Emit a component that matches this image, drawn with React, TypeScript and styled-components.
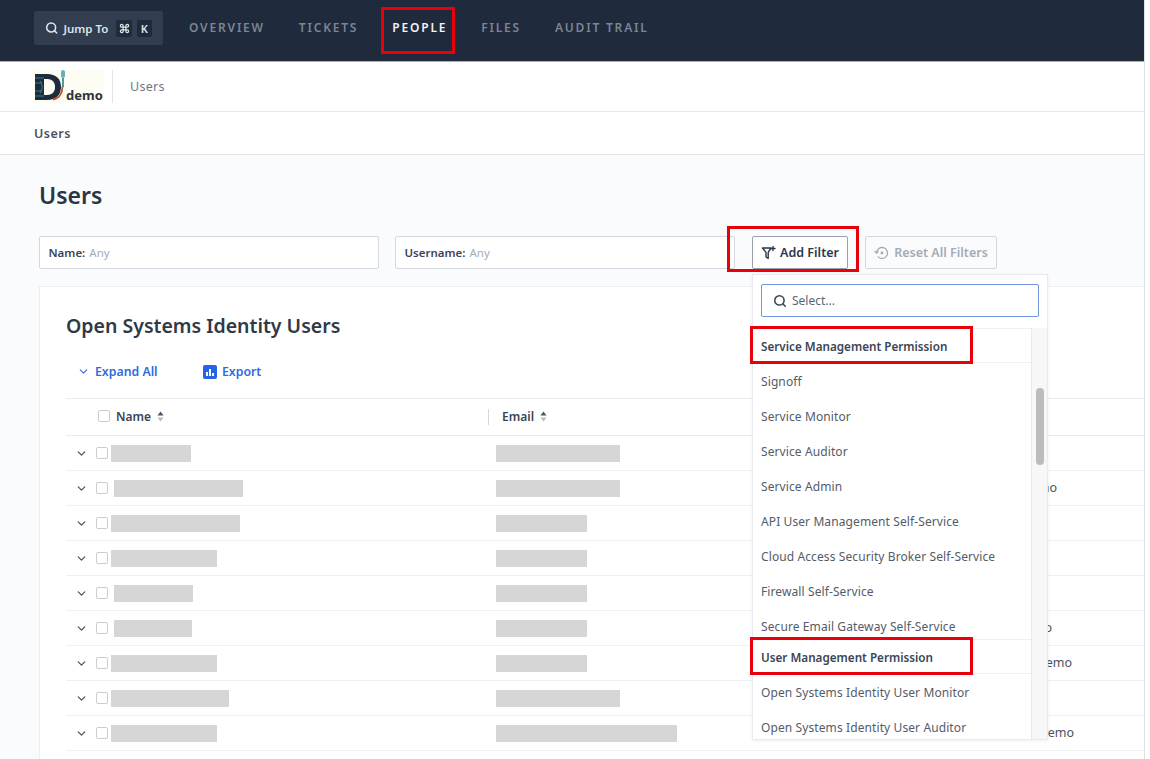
import styled, { createGlobalStyle } from 'styled-components'
import { ChevronDown, Command, Search } from 'lucide-react'

const font = `"Noto Sans", "Liberation Sans", sans-serif`

interface UserRow {
    nameStart: number
    nameWidth: number
    emailWidth: number
    indent?: number
}

const users: UserRow[] = [
    { nameStart: 4, nameWidth: 80, emailWidth: 124 },
    { nameStart: 7, nameWidth: 129, emailWidth: 124, indent: 275 },
    { nameStart: 4, nameWidth: 129, emailWidth: 91 },
    { nameStart: 4, nameWidth: 106, emailWidth: 91 },
    { nameStart: 7, nameWidth: 79, emailWidth: 91 },
    { nameStart: 7, nameWidth: 78, emailWidth: 91, indent: 270 },
    { nameStart: 4, nameWidth: 106, emailWidth: 91, indent: 290 },
    { nameStart: 4, nameWidth: 118, emailWidth: 124 },
    { nameStart: 4, nameWidth: 106, emailWidth: 181, indent: 292 },
    { nameStart: 4, nameWidth: 118, emailWidth: 124 },
]

const navLinks = ['OVERVIEW', 'TICKETS', 'PEOPLE', 'FILES', 'AUDIT TRAIL']

const permissionGroups = [
    {
        title: 'Service Management Permission',
        options: [
            'Signoff',
            'Service Monitor',
            'Service Auditor',
            'Service Admin',
            'API User Management Self-Service',
            'Cloud Access Security Broker Self-Service',
            'Firewall Self-Service',
            'Secure Email Gateway Self-Service',
        ],
    },
    {
        title: 'User Management Permission',
        options: ['Open Systems Identity User Monitor', 'Open Systems Identity User Auditor'],
    },
]

function Logo() {
    return (
        <LogoBox>
            <svg width="36" height="33" viewBox="0 0 36 33" fill="none">
                <path d="M1 4h12c9 0 14 5 14 13s-5 13-14 13H1z" fill="#1d2b3a" />
                <path d="M1 8h9M1 13h7M1 21h7M1 26h9" stroke="#3a7f8c" strokeWidth="1" />
                <path d="M10 9h3c6 0 8 4 8 8s-2 8-8 8h-3z" fill="#fdfdf3" />
                <path d="M6 11c3 3 3 9 0 12" stroke="#2f7483" strokeWidth="1.200" />
                <path d="M19 29.500c6-1 9.500-6 9.500-13" stroke="#c4512f" strokeWidth="1.800" />
                <path d="M29 17V8" stroke="#3f8c98" strokeWidth="1.800" />
                <rect x="27" y="0" width="4" height="8" rx="2" fill="#6aaeb8" />
            </svg>
            <LogoText>demo</LogoText>
        </LogoBox>
    )
}

function FilterPlusIcon() {
    return (
        <svg width="16" height="16" viewBox="0 0 16 16" fill="none" stroke="#2d3748" strokeWidth="1.400" strokeLinejoin="round" strokeLinecap="round">
            <path d="M1.500 3h8.500L7.200 7.400v6L5 12V7.400z" />
            <path d="M12 1.500v4M10 3.500h4" />
        </svg>
    )
}

function ResetIcon() {
    return (
        <svg width="16" height="16" viewBox="0 0 16 16" fill="none" stroke="#a5abb5" strokeWidth="1.300" strokeLinecap="round" strokeLinejoin="round">
            <path d="M2.500 8a5.500 5.500 0 1 1 1.600 3.900" />
            <path d="M1 6.500 2.500 8 4 6.500" />
            <circle cx="8" cy="8" r="0.800" fill="#a5abb5" />
        </svg>
    )
}

function ExportIcon() {
    return (
        <svg width="14" height="14" viewBox="0 0 14 14">
            <rect width="14" height="14" rx="2" fill="#2563eb" />
            <path d="M3 7h2v4H3zM6 4h2v7H6zM9 8h2v3H9z" fill="#fff" />
        </svg>
    )
}

function SortIcon() {
    return (
        <svg width="7" height="11" viewBox="0 0 7 11">
            <path d="M3.500 0.500 6.500 4.500H0.500z" fill="#4a5568" />
            <path d="M3.500 10.500 0.500 6.500H6.500z" fill="#b6bcc6" />
        </svg>
    )
}

export default function App() {
    return (
        <Screen>
            <GlobalStyle />
            <Page>
                <TopNav>
                    <JumpTo>
                        <Search size={14} strokeWidth={2.8} color="#dfe3ea" />
                        <JumpLabel>Jump To</JumpLabel>
                        <KeyCap><Command size={11} strokeWidth={2.6} /></KeyCap>
                        <KeyCap>K</KeyCap>
                    </JumpTo>
                    <NavLinks>
                        {navLinks.map((link) => <NavLink key={link} $active={link === 'PEOPLE'}>{link}</NavLink>)}
                    </NavLinks>
                </TopNav>
                <SubHeader>
                    <Logo />
                    <SubTitle>Users</SubTitle>
                </SubHeader>
                <Breadcrumb>Users</Breadcrumb>
                <Main>
                    <PageTitle>Users</PageTitle>
                    <FilterRow>
                        <FilterInput><b>Name:</b> <span>Any</span></FilterInput>
                        <FilterInput><b>Username:</b> <span>Any</span></FilterInput>
                        <AddFilterWrap>
                            <AddFilter><FilterPlusIcon />Add Filter</AddFilter>
                            <Dropdown>
                                <DropdownSearch>
                                    <Search size={14} strokeWidth={2.6} color="#3b4557" />
                                    Select...
                                </DropdownSearch>
                                <ListArea>
                                    <OptionList>
                                        {permissionGroups.map((group) => (
                                            <OptionGroup key={group.title}>
                                                <GroupTitle>{group.title}</GroupTitle>
                                                {group.options.map((option) => <Option key={option}>{option}</Option>)}
                                            </OptionGroup>
                                        ))}
                                    </OptionList>
                                    <ScrollTrack><ScrollThumb /></ScrollTrack>
                                </ListArea>
                            </Dropdown>
                        </AddFilterWrap>
                        <ResetFilters><ResetIcon />Reset All Filters</ResetFilters>
                    </FilterRow>
                    <Card>
                        <CardTitle>Open Systems Identity Users</CardTitle>
                        <Toolbar>
                            <ToolbarAction $width={126}><ChevronDown size={13} strokeWidth={2} />Expand All</ToolbarAction>
                            <ToolbarAction><ExportIcon />Export</ToolbarAction>
                        </Toolbar>
                        <HeaderRow>
                            <HeaderCell>
                                <Checkbox />
                                Name
                                <SortIcon />
                            </HeaderCell>
                            <HeaderCell $divider>
                                Email
                                <SortIcon />
                            </HeaderCell>
                            <div />
                        </HeaderRow>
                        {users.map((user, index) => (
                            <Row key={index}>
                                <NameCell>
                                    <ChevronDown size={13} strokeWidth={2.4} color="#4a5568" />
                                    <RowCheck />
                                    <Redacted $left={user.nameStart} $width={user.nameWidth} />
                                </NameCell>
                                <EmailCell><Redacted $width={user.emailWidth} /></EmailCell>
                                {user.indent ? <GroupCell $indent={user.indent}>demo</GroupCell> : <div />}
                            </Row>
                        ))}
                    </Card>
                </Main>
            </Page>
            <Annotation $left={381} $top={7} $width={74} $height={47} />
            <Annotation $left={727} $top={226} $width={132} $height={46} />
            <Annotation $left={750} $top={326} $width={223} $height={38} />
            <Annotation $left={750} $top={637} $width={223} $height={38} />
        </Screen>
    )
}

const GlobalStyle = createGlobalStyle`
    html, body {
        margin: 0;
        background: #fff;
    }
    * {
        box-sizing: border-box;
    }
`

const Screen = styled.div`
    position: relative;
    width: 1150px;
    height: 759px;
    overflow: hidden;
    font-family: ${font};
    color: #2d3748;
`

const Page = styled.div`
    width: 1145px;
    height: 759px;
    display: flex;
    flex-direction: column;
    border-right: 1px solid #dfe2e7;
    background: #fff;
`

const TopNav = styled.header`
    flex: none;
    height: 62px;
    display: flex;
    align-items: flex-start;
    padding: 11px 0 0 34px;
    background: #1f2a3d;
    border-bottom: 1px solid #a9afbb;
`

const JumpTo = styled.div`
    width: 129px;
    height: 34px;
    display: flex;
    align-items: center;
    padding: 0 6px 0 11px;
    background: #323d50;
    border-radius: 2px;
    color: #dfe3ea;
`

const JumpLabel = styled.span`
    margin: 0 8px 0 5px;
    font-size: 11.500px;
    font-weight: 600;
    white-space: nowrap;
`

const KeyCap = styled.span`
    width: 16px;
    height: 17px;
    margin-right: 5px;
    display: flex;
    align-items: center;
    justify-content: center;
    background: #1f2a3d;
    border-radius: 2px;
    font-size: 11px;
    font-weight: 600;
`

const NavLinks = styled.nav`
    display: flex;
    gap: 34px;
    margin-left: 26px;
    height: 32px;
    align-items: center;
`

const NavLink = styled.a<{ $active?: boolean }>`
    font-size: 12px;
    font-weight: 600;
    letter-spacing: 1.800px;
    white-space: nowrap;
    color: ${props => props.$active ? '#f1f3f6' : '#7d8592'};
`

const SubHeader = styled.div`
    flex: none;
    height: 50px;
    display: flex;
    align-items: center;
    padding-left: 34px;
    border-bottom: 1px solid #e6e8ec;
`

const LogoBox = styled.div`
    width: 79px;
    height: 33px;
    display: flex;
    align-items: flex-end;
    padding-right: 9px;
    border-right: 1px solid #e2e4e8;
    background: linear-gradient(90deg, #fdfdf3 0, #fdfdf3 70px, #fff 70px);
`

const LogoText = styled.span`
    margin-left: -4px;
    font-size: 13px;
    line-height: 16px;
    font-weight: 700;
    color: #2a3340;
`

const SubTitle = styled.span`
    margin-left: 17px;
    font-size: 12.500px;
    color: #6f7683;
    letter-spacing: 0.300px;
`

const Breadcrumb = styled.div`
    flex: none;
    height: 43px;
    display: flex;
    align-items: center;
    padding-left: 34px;
    border-bottom: 1px solid #e2e4e8;
    font-size: 12.500px;
    font-weight: 600;
    letter-spacing: 0.500px;
    color: #4a5261;
`

const Main = styled.main`
    flex: 1;
    min-height: 0;
    padding: 24px 0 0 39px;
    overflow: hidden;
    background: #fafbfd;
`

const PageTitle = styled.h1`
    margin: 0;
    font-size: 23px;
    line-height: 32px;
    font-weight: 600;
    color: #2b3544;
`

const FilterRow = styled.div`
    display: flex;
    align-items: flex-start;
    margin-top: 25px;
`

const FilterInput = styled.div`
    width: 340px;
    height: 33px;
    margin-right: 16px;
    display: flex;
    align-items: center;
    gap: 4px;
    padding-left: 8.500px;
    background: #fff;
    border: 1px solid #d5d8de;
    border-radius: 2px;
    font-size: 11.500px;

    b {
        font-weight: 600;
        color: #3b4557;
    }
    span {
        color: #a5abb5;
    }
`

const AddFilterWrap = styled.div`
    position: relative;
    margin-left: 1px;
`

const AddFilter = styled.button`
    width: 96px;
    height: 33px;
    display: flex;
    align-items: center;
    justify-content: center;
    gap: 3px;
    padding: 0;
    background: #fff;
    border: 1px solid #9aa1ad;
    border-radius: 2px;
    font-family: ${font};
    font-size: 12.500px;
    font-weight: 600;
    color: #2d3748;
`

const ResetFilters = styled(AddFilter)`
    width: 132px;
    margin-left: 17px;
    gap: 4px;
    background: transparent;
    border-color: #d5d8de;
    color: #a5abb5;
`

const Dropdown = styled.div`
    position: absolute;
    top: 38px;
    left: 0;
    z-index: 2;
    width: 296px;
    height: 466px;
    display: flex;
    flex-direction: column;
    background: #fff;
    border: 1px solid #e8eaee;
    box-shadow: 0 1px 3px rgba(40, 50, 70, 0.08);
`

const DropdownSearch = styled.div`
    flex: none;
    width: 278px;
    height: 33px;
    margin: 9px 0 11px 8px;
    display: flex;
    align-items: center;
    gap: 5px;
    padding-left: 11px;
    border: 1px solid #6f96dc;
    border-radius: 2px;
    font-size: 12px;
    color: #5d6572;
`

const ListArea = styled.div`
    flex: 1;
    min-height: 0;
    display: flex;
    overflow: hidden;
`

const OptionList = styled.div`
    flex: 1;
    min-width: 0;
    overflow: hidden;
`

const OptionGroup = styled.div`
    & + & {
        margin-top: -4px;
    }
`

const Option = styled.div`
    height: 35px;
    padding-left: 8px;
    line-height: 37px;
    font-size: 12px;
    letter-spacing: 0.100px;
    color: #545c69;
    white-space: nowrap;
`

const GroupTitle = styled(Option)`
    position: relative;
    background: #fff;
    border-top: 1px solid #eef0f3;
    border-bottom: 1px solid #eef0f3;
    font-size: 11.700px;
    font-weight: 600;
    letter-spacing: 0;
    color: #3b4557;
    line-height: 35px;
`

const ScrollTrack = styled.div`
    flex: none;
    position: relative;
    width: 16px;
    background: #f7f7f8;
    border-left: 1px solid #e8e9ec;
`

const ScrollThumb = styled.div`
    position: absolute;
    top: 60px;
    left: 4px;
    width: 8px;
    height: 77px;
    border-radius: 4px;
    background: #bcbcbc;
`

const Card = styled.section`
    margin-top: 17px;
    padding: 24px 0 0 26px;
    background: #fff;
    border: 1px solid #eceef1;
    border-right: none;
    border-bottom: none;
    height: 600px;
`

const CardTitle = styled.h2`
    margin: 0;
    font-size: 19.500px;
    line-height: 30px;
    font-weight: 600;
    color: #2f3947;
`

const Toolbar = styled.div`
    height: 57px;
    display: flex;
    align-items: center;
    padding: 4px 0 0 11px;
`

const ToolbarAction = styled.a<{ $width?: number }>`
    display: flex;
    align-items: center;
    gap: 5px;
    width: ${props => props.$width ? `${props.$width}px` : 'auto'};
    font-size: 12.300px;
    font-weight: 600;
    color: #2f6bde;
`

const tableColumns = `grid-template-columns: 422px 260px 1fr;`

const HeaderRow = styled.div`
    ${tableColumns}
    display: grid;
    height: 38px;
    padding-bottom: 2px;
    border-top: 1px solid #e9ebee;
    border-bottom: 1px solid #e9ebee;
`

const HeaderCell = styled.div<{ $divider?: boolean }>`
    position: relative;
    display: flex;
    align-items: center;
    gap: 6px;
    padding-left: ${props => props.$divider ? '14px' : '32px'};
    font-size: 12px;
    font-weight: 600;
    color: #3b4557;

    ${props => props.$divider && `
        &::before {
            content: '';
            position: absolute;
            left: 0;
            top: 10px;
            height: 16px;
            border-left: 1px solid #d5d8de;
        }
    `}
`

const Checkbox = styled.span`
    flex: none;
    width: 12px;
    height: 12px;
    background: #fff;
    border: 1px solid #c9cdd4;
    border-radius: 2px;
`

const Row = styled.div`
    ${tableColumns}
    display: grid;
    height: 35px;
    border-bottom: 1px solid #eef0f3;
`

const NameCell = styled.div`
    display: flex;
    align-items: center;
    padding-left: 9px;
    gap: 4px;
`

const RowCheck = styled(Checkbox)`
    margin-left: 4px;
    margin-right: -5px;
`

const Redacted = styled.span<{ $left?: number; $width: number }>`
    height: 17px;
    margin-left: ${props => props.$left ?? 0}px;
    width: ${props => props.$width}px;
    background: #d6d6d6;
`

const EmailCell = styled.div`
    display: flex;
    align-items: center;
    padding-left: 8px;
`

const GroupCell = styled.div<{ $indent: number }>`
    padding-left: ${props => props.$indent}px;
    line-height: 34px;
    font-size: 12.500px;
    color: #4a5261;
`

const Annotation = styled.div<{ $left: number; $top: number; $width: number; $height: number }>`
    position: absolute;
    z-index: 3;
    left: ${props => props.$left}px;
    top: ${props => props.$top}px;
    width: ${props => props.$width}px;
    height: ${props => props.$height}px;
    border: 3px solid #e8000b;
    pointer-events: none;
`
